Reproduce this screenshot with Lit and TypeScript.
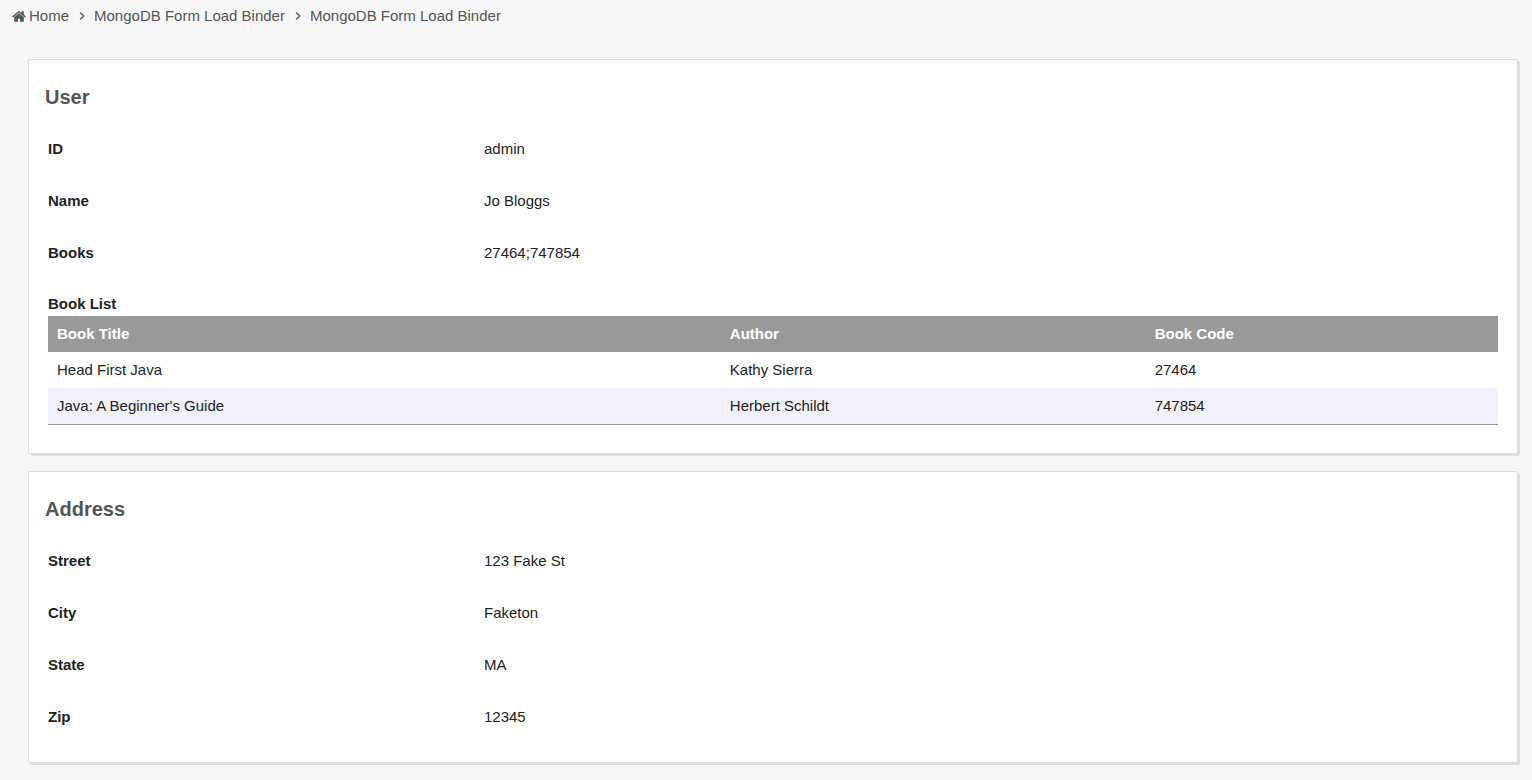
import { LitElement, html, css } from "lit";
import { customElement, property } from "lit/decorators.js";

interface Field {
  label: string;
  value: string;
}

interface Book {
  title: string;
  author: string;
  code: string;
}

@customElement("bread-crumbs")
class BreadCrumbs extends LitElement {
  @property({ attribute: false }) items: string[] = [];

  static styles = css`
    :host {
      display: block;
    }
    .trail {
      display: flex;
      align-items: center;
      margin: 0;
      padding: 0 12px;
      list-style: none;
      line-height: 32px;
    }
    .item {
      display: flex;
      align-items: center;
    }
    .link {
      display: flex;
      align-items: center;
      gap: 3px;
      color: #555;
      text-decoration: none;
    }
    .home {
      width: 14px;
      height: 15px;
      fill: #555;
    }
    .arrow {
      width: 6px;
      height: 10px;
      margin: 0 9px 0 10px;
      fill: none;
      stroke: #555;
      stroke-width: 1.2;
    }
  `;

  render() {
    return html`<nav aria-label="Breadcrumb">
      <ol class="trail">
        <li class="item">
          <a class="link" href="#"
            ><svg class="home" viewBox="0 0 1664 1792" aria-hidden="true">
              <path
                d="M1408 992v480q0 26-19 45t-45 19h-384v-384h-256v384h-384q-26 0-45-19t-19-45v-480q0-1 .5-3t.5-3l575-474 575 474q1 2 1 6zm223-69l-62 74q-8 9-21 11h-3q-13 0-21-7l-692-577-692 577q-12 8-24 7-13-2-21-11l-62-74q-8-10-7-23.5t11-21.5l719-599q32-26 76-26t76 26l244 204v-195q0-14 9-23t23-9h192q14 0 23 9t9 23v408l219 182q10 8 11 21.5t-7 23.5z"
              /></svg
            >Home</a
          >
        </li>
        ${this.items.map(
          (item) => html`<li class="item">
            <svg class="arrow" viewBox="0 0 6 10" aria-hidden="true">
              <path d="M1 1.5 4.8 5 1 8.5" />
            </svg>
            <a class="link" href="#">${item}</a>
          </li>`
        )}
      </ol>
    </nav>`;
  }
}

@customElement("form-section")
class FormSection extends LitElement {
  @property() heading = "";
  @property({ attribute: false }) fields: Field[] = [];

  static styles = css`
    :host {
      display: block;
      padding: 25px 19px 19px;
      background: #fff;
      border: 1px solid #ddd;
      border-radius: 2px;
      box-shadow: 2px 2px 0 #ddd;
    }
    .heading {
      margin: 0 -3px 14px;
      color: #555;
      font-size: 20px;
      line-height: 24px;
    }
    .fields {
      margin: 0;
    }
    .field {
      display: grid;
      grid-template-columns: 30% 1fr;
      column-gap: 1px;
      padding: 16px 0;
      line-height: 20px;
    }
    .label {
      font-weight: bold;
    }
    .value {
      margin: 0;
    }
  `;

  render() {
    return html`
      <h2 class="heading">${this.heading}</h2>
      <dl class="fields">
        ${this.fields.map(
          (f) => html`<div class="field">
            <dt class="label">${f.label}</dt>
            <dd class="value">${f.value}</dd>
          </div>`
        )}
      </dl>
      <slot></slot>
    `;
  }
}

@customElement("book-list")
class BookList extends LitElement {
  @property({ attribute: false }) books: Book[] = [];

  static styles = css`
    :host {
      display: block;
      padding: 15px 0 9px;
    }
    .table {
      width: 100%;
      table-layout: fixed;
      border-collapse: separate;
      border-spacing: 0;
      border-bottom: 1px solid #999;
    }
    .caption {
      padding-bottom: 2px;
      font-weight: bold;
      line-height: 20px;
      text-align: left;
    }
    .title {
      width: 46.4%;
    }
    .author {
      width: 29.3%;
    }
    .head,
    .cell {
      box-sizing: border-box;
      height: 36px;
      padding: 0 9px 2px;
      text-align: left;
    }
    .head {
      color: #fff;
      background: #999;
    }
    .row:nth-child(even) {
      background: #f1f1fb;
    }
  `;

  render() {
    return html`<table class="table">
      <caption class="caption">
        Book List
      </caption>
      <thead>
        <tr>
          <th class="head title" scope="col">Book Title</th>
          <th class="head author" scope="col">Author</th>
          <th class="head" scope="col">Book Code</th>
        </tr>
      </thead>
      <tbody>
        ${this.books.map(
          (b) => html`<tr class="row">
            <td class="cell">${b.title}</td>
            <td class="cell">${b.author}</td>
            <td class="cell">${b.code}</td>
          </tr>`
        )}
      </tbody>
    </table>`;
  }
}

@customElement("app-root")
class AppRoot extends LitElement {
  static styles = css`
    :host {
      display: block;
      box-sizing: border-box;
      min-height: 100vh;
      padding-bottom: 17px;
      color: #222;
      background: #f7f7f7;
      font-family: "Liberation Sans", Arial, sans-serif;
      font-size: 15px;
    }
    .sections {
      display: grid;
      gap: 17px;
      margin: 27px 14px 0 28px;
    }
  `;

  private crumbs = ["MongoDB Form Load Binder", "MongoDB Form Load Binder"];

  private user: Field[] = [
    { label: "ID", value: "admin" },
    { label: "Name", value: "Jo Bloggs" },
    { label: "Books", value: "27464;747854" },
  ];

  private books: Book[] = [
    { title: "Head First Java", author: "Kathy Sierra", code: "27464" },
    { title: "Java: A Beginner's Guide", author: "Herbert Schildt", code: "747854" },
  ];

  private address: Field[] = [
    { label: "Street", value: "123 Fake St" },
    { label: "City", value: "Faketon" },
    { label: "State", value: "MA" },
    { label: "Zip", value: "12345" },
  ];

  render() {
    return html`
      <bread-crumbs .items=${this.crumbs}></bread-crumbs>
      <main class="sections">
        <form-section heading="User" .fields=${this.user}>
          <book-list .books=${this.books}></book-list>
        </form-section>
        <form-section heading="Address" .fields=${this.address}></form-section>
      </main>
    `;
  }
}
